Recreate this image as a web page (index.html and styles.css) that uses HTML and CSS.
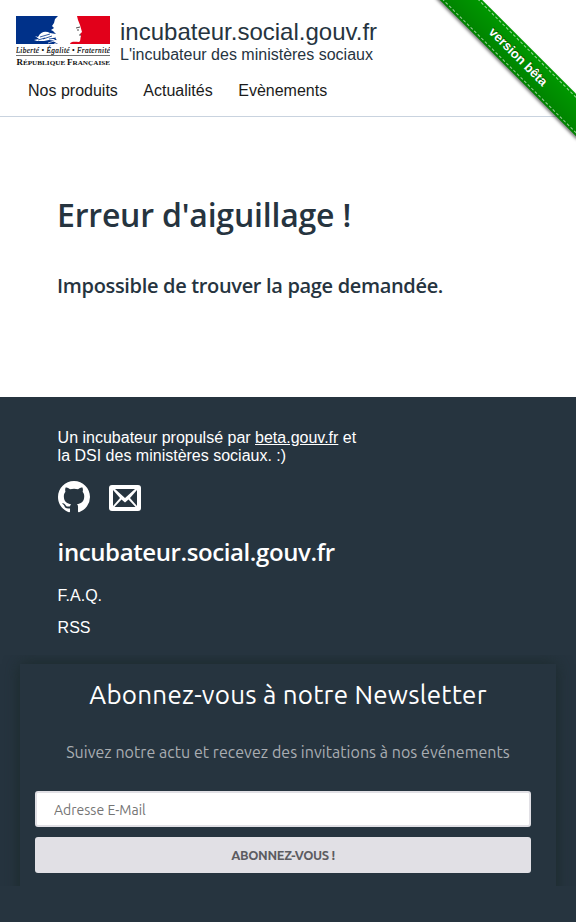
FILE: index.html
```html
<!DOCTYPE html>
<html lang="fr">
<head>
<meta charset="utf-8">
<title>incubateur.social.gouv.fr</title>
<link rel="stylesheet" href="styles.css">
</head>
<body>
<header class="header">
  <div class="brand">
    <svg class="logo" viewBox="0 0 94 50">
      <path fill="#003189" d="M0 0H42L39 3L38 7L36 10L38 12L35 14L37 15L40 18L38 21L41 24L37 25L42 28H0Z"/>
      <path fill="#fff" d="M22 21C25 15 30 15 34 17L40 18L41 22L36 22L41 25L33 24L28 25L21 25L18 24L23 23L19 20Z"/>
      <path fill="none" stroke="#003189" stroke-width=".8" d="M24 21L34 18M27 23L36 20M22 24L29 22M33 23L40 22"/>
      <path fill="none" stroke="#fff" stroke-width=".7" d="M32 27L41 24M38 28L43 26"/>
      <path fill="#e2001a" d="M61 0H94V28H54C55 25 59 26 63 26C65 25 64 22 65 20L64 18L66 16L64 9L62 4Z"/>
      <path fill="none" stroke="#222" stroke-width=".8" d="M60 12L64 11M61 14L63 14M63 19L65 19"/>
      <text class="motto" x="0" y="37.2" textLength="94" lengthAdjust="spacing">Liberté • Égalité • Fraternité</text>
      <path stroke="#333" stroke-width=".7" d="M0 39.5H94"/>
      <text class="republic" x=".5" y="48.7" textLength="93.5" lengthAdjust="spacingAndGlyphs"><tspan class="cap">R</tspan>ÉPUBLIQUE <tspan class="cap">F</tspan>RANÇAISE</text>
    </svg>
    <div class="brand-text">
      <div class="site">incubateur.social.gouv.fr</div>
      <div class="tagline">L'incubateur des ministères sociaux</div>
    </div>
  </div>
  <nav class="nav"><a>Nos produits</a><a>Actualités</a><a>Evènements</a></nav>
</header>
<div class="ribbon"><span class="ribbon-band">version bêta</span></div>
<main class="main">
  <h1>Erreur d'aiguillage !</h1>
  <h2>Impossible de trouver la page demandée.</h2>
</main>
<footer class="footer">
  <div class="about">
    <p>Un incubateur propulsé par <a class="link">beta.gouv.fr</a> et<br>la DSI des ministères sociaux. :)</p>
    <div class="icons">
      <svg class="github" viewBox="0 0 16 16"><path fill="#fff" d="M8 0C3.58 0 0 3.58 0 8c0 3.540 2.290 6.530 5.470 7.590.4.070.55-.17.55-.38 0-.19-.01-.82-.01-1.490-2.010.37-2.530-.49-2.690-.94-.09-.23-.48-.94-.82-1.130-.28-.15-.68-.52-.01-.53.63-.01 1.080.58 1.230.82.72 1.210 1.870.87 2.330.66.07-.52.28-.87.51-1.070-1.780-.2-3.640-.89-3.640-3.950 0-.87.31-1.590.82-2.150-.08-.2-.36-1.020.08-2.120 0 0 .67-.21 2.200.82.64-.18 1.320-.27 2-.27s1.360.09 2 .27c1.530-1.040 2.200-.82 2.200-.82.44 1.100.16 1.920.08 2.120.51.56.82 1.270.82 2.150 0 3.070-1.870 3.750-3.650 3.950.29.25.54.73.54 1.480 0 1.070-.01 1.930-.01 2.200 0 .21.15.46.55.38A8.010 8.010 0 0 0 16 8c0-4.420-3.580-8-8-8z"/></svg>
      <svg class="mail" viewBox="0 0 32 26"><rect width="32" height="26" rx="3" fill="#fff"/><path fill="#26343f" d="M6 4H26L16 13ZM4 5L11 13L4 21ZM28 5L21 13L28 21ZM5.500 22L12.500 14.500L16 17.500L19.500 14.500L26.500 22Z"/></svg>
    </div>
    <h3>incubateur.social.gouv.fr</h3>
    <ul class="links"><li>F.A.Q.</li><li>RSS</li></ul>
  </div>
  <div class="news-frame">
    <form class="news">
      <div class="news-title"><span>Abonnez-vous à notre Newsletter</span></div>
      <div class="news-copy"><span>Suivez notre actu et recevez des invitations à nos événements</span></div>
      <input class="email" type="email" placeholder="Adresse E-Mail">
      <button class="submit" type="button"><span>ABONNEZ-VOUS !</span></button>
    </form>
  </div>
</footer>
</body>
</html>
```
FILE: styles.css
```css
* { box-sizing: border-box; }
body { margin: 0; background: #fff; color: #26343f; font: 16px/18px "Liberation Sans", Arial, sans-serif; position: relative; }
h1, h2, h3, p, ul { margin: 0; padding: 0; }
.header { height: 117px; border-bottom: 1px solid #c9d3df; padding: 16px 16px 0; }
.brand { display: flex; gap: 10px; height: 50px; }
.logo { width: 94px; height: 50px; flex: none; }
.motto { font: italic 7.2px "Liberation Serif", serif; fill: #000; stroke: #000; stroke-width: .15px; }
.republic { font: bold 6.6px "Liberation Serif", serif; fill: #111; }
.cap { font-size: 8.2px; }
.brand-text { white-space: nowrap; }
.site { font-size: 24px; line-height: 28px; padding-top: 2px; }
.tagline { line-height: 18px; }
.nav { display: flex; gap: 25.5px; padding: 16px 12px 0; color: #1b1b1b; }
.ribbon { position: absolute; top: 0; right: 0; width: 157px; height: 157px; overflow: hidden; font: bold 13px "Liberation Sans", Arial, sans-serif; }
.ribbon-band { position: absolute; top: 42px; right: -42px; width: 200px; height: 30px; line-height: 20px; padding: 5px 0; color: #fff; text-align: center; text-shadow: 0 -1px rgba(0,0,0,.5); transform: rotate(45deg); background: #090 linear-gradient(to bottom, transparent, rgba(0,0,0,.15)); box-shadow: 0 2px 3px rgba(0,0,0,.5); }
.ribbon-band::after { content: ""; position: absolute; inset: 2px 0; border: dashed rgba(255,255,255,.6); border-width: 1px 0; }
.main { height: 280px; padding: 78px 57px 0; white-space: nowrap; font-family: "Trebuchet MS", "Open Sans", sans-serif; }
.main h1 { font-size: 32px; line-height: 40px; font-weight: 600; letter-spacing: -.2px; }
.main h2 { font-size: 20px; line-height: 26px; font-weight: 600; margin-top: 38px; letter-spacing: -.33px; }
.footer { background: #26343f; color: #fff; height: 525px; padding-top: 32px; }
.about { padding: 0 57.6px; height: 226px; }
.link { text-decoration: underline; }
.icons { display: flex; align-items: center; gap: 19px; height: 32px; margin-top: 16px; padding-left: .4px; }
.github { width: 32px; height: 32px; }
.mail { width: 32px; height: 26px; margin-top: 2px; }
.about h3 { font: 600 24px/30px "Trebuchet MS", "Open Sans", sans-serif; letter-spacing: -.4px; margin-top: 24px; }
.links { list-style: none; margin-top: 20px; }
.links li { height: 32px; }
.news-frame { height: 231px; overflow: hidden; padding: 9px 20px 0; font-family: Ubuntu, "Noto Sans", sans-serif; }
.news { height: 250px; padding: 12px 25px 0 15px; display: flex; flex-direction: column; box-shadow: 0 0 15px rgba(25,40,40,.9); background: #26343f; text-align: center; white-space: nowrap; }
.news-title { font-size: 26px; line-height: 38px; margin-right: -10px; letter-spacing: .22px; }
.news-copy { font-size: 16px; line-height: 24px; color: #a9adb2; margin: 26px -10px 27px 0; letter-spacing: .04px; }
.email { width: 100%; height: 36px; border: 2px solid #e1e0e5; border-radius: 3px; padding: 1px 17px 0; font: 14px Ubuntu, "Noto Sans", sans-serif; background: #fff; }
.email::placeholder { color: #757575; }
.submit { height: 36px; margin-top: 10px; border: 0; border-radius: 3px; background: #e1e0e5; color: #5c5c61; font: 600 13px Ubuntu, "Noto Sans", sans-serif; letter-spacing: -.4px; }
```
